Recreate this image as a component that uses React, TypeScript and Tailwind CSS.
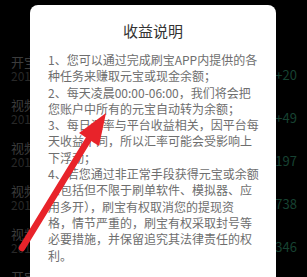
import React from "react";

const rows = [
  { t: "开宝箱奖励", d: "2019-05-20 12:30", n: "+20" },
  { t: "视频奖励", d: "2019-05-20 11:02", n: "+49" },
  { t: "视频奖励", d: "2019-05-20 10:41", n: "+197" },
  { t: "视频奖励", d: "2019-05-20 10:15", n: "+738" },
  { t: "视频奖励", d: "2019-05-20 09:58", n: "+346" },
  { t: "开宝箱奖励", d: "2019-05-20 09:30", n: "+12" },
];

const lines = [
  "1、您可以通过完成刷宝APP内提供的各",
  "种任务来赚取元宝或现金余额；",
  "2、每天凌晨00:00-06:00，我们将会把",
  "您账户中所有的元宝自动转为余额；",
  "3、每日汇率与平台收益相关，因平台每",
  "天收益不同，所以汇率可能会受影响上",
  "下浮动；",
  "4、若您通过非正常手段获得元宝或余额",
  "（包括但不限于刷单软件、模拟器、应",
  "用多开），刷宝有权取消您的提现资",
  "格，情节严重的，刷宝有权采取封号等",
  "必要措施，并保留追究其法律责任的权",
  "利。",
];

export default function App() {
  return (
    <div
      className="relative w-[307px] h-[277px] overflow-hidden bg-black"
      style={{ fontFamily: '"Noto Sans CJK SC", "Noto Sans", sans-serif' }}
    >
      <div className="flex flex-col pt-[48px]">
        {rows.map((r, i) => (
          <div key={i} className="flex h-[43px] justify-between pl-[11px] pr-[10px]">
            <div className="flex flex-col pt-[7px]">
              <div className="text-[13px] leading-[14px] text-[#3c3c3c] whitespace-nowrap">{r.t}</div>
              <div className="text-[12px] leading-[14px] text-[#282828] whitespace-nowrap">{r.d}</div>
            </div>
            <div className="pt-[19px] text-[13px] leading-[16px] text-[#174232]">{r.n}</div>
          </div>
        ))}
      </div>

      <div className="absolute left-[30px] top-[5px] w-[246px] h-[290px] rounded-[8px] bg-white">
        <div className="pt-[16px] text-center text-[15px] leading-[20px] text-[#333333]">收益说明</div>
        <div className="mt-[11px] px-[18px] text-[12px] leading-[16.3px] text-[#6e6e6e]">
          {lines.map((l, i) => (
            <div key={i} className="whitespace-nowrap">{l}</div>
          ))}
        </div>
      </div>

      <svg
        className="pointer-events-none absolute inset-0"
        width="307"
        height="277"
        viewBox="0 0 307 277"
      >
        <line x1="22" y1="248" x2="90" y2="137" stroke="#e8232a" strokeWidth="6.5" strokeLinecap="round" />
        <polygon points="106,113 79,133 99,146" fill="#e8232a" />
      </svg>
    </div>
  );
}
